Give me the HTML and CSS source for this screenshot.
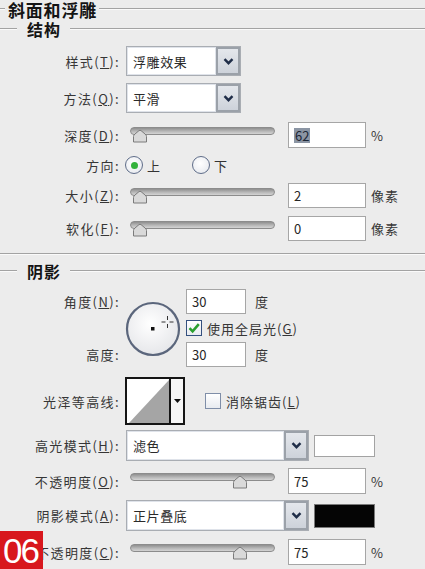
FILE: index.html
```html
<!DOCTYPE html>
<html lang="zh-CN">
<head>
<meta charset="utf-8">
<title>斜面和浮雕</title>
<link rel="stylesheet" href="styles.css">
</head>
<body>
<div class="panel">
  <div class="legend legend-top"><span class="lead"></span><span class="txt">斜面和浮雕</span><span class="line"></span></div>
  <div class="legend legend-sub"><span class="lead"></span><span class="txt">结构</span><span class="line"></span></div>

  <div class="row row-style">
    <span class="lbl">样式(<u>T</u>):</span>
    <div class="select sel-sm"><span class="val">浮雕效果</span><span class="btn"><svg width="11" height="7" viewBox="0 0 11 7"><polyline points="1.5,1.2 5.5,5.2 9.5,1.2" fill="none" stroke="#1f2d48" stroke-width="2.4"/></svg></span></div>
  </div>
  <div class="row row-method">
    <span class="lbl">方法(<u>Q</u>):</span>
    <div class="select sel-sm"><span class="val">平滑</span><span class="btn"><svg width="11" height="7" viewBox="0 0 11 7"><polyline points="1.5,1.2 5.5,5.2 9.5,1.2" fill="none" stroke="#1f2d48" stroke-width="2.4"/></svg></span></div>
  </div>
  <div class="row row-depth">
    <span class="lbl">深度(<u>D</u>):</span>
    <div class="slider"><div class="track"></div><svg class="thumb" style="left:2px" width="16" height="14" viewBox="0 0 16 14"><path d="M1.5 13 L1.5 7.5 Q1.5 6 3 5 L7 1.6 Q8 0.9 9 1.6 L13 5 Q14.5 6 14.5 7.5 L14.5 13 Z" fill="#d9d9d9" stroke="#7b7b7b" stroke-width="1"/></svg></div>
    <span class="num"><span class="sel">62</span></span><span class="unit">%</span>
  </div>
  <div class="row row-dir">
    <span class="lbl lbl-dir">方向:</span>
    <span class="radio on"></span><span class="opt">上</span>
    <span class="radio radio-2"></span><span class="opt">下</span>
  </div>
  <div class="row row-size">
    <span class="lbl">大小(<u>Z</u>):</span>
    <div class="slider"><div class="track"></div><svg class="thumb" style="left:2px" width="16" height="14" viewBox="0 0 16 14"><path d="M1.5 13 L1.5 7.5 Q1.5 6 3 5 L7 1.6 Q8 0.9 9 1.6 L13 5 Q14.5 6 14.5 7.5 L14.5 13 Z" fill="#d9d9d9" stroke="#7b7b7b" stroke-width="1"/></svg></div>
    <span class="num">2</span><span class="unit">像素</span>
  </div>
  <div class="row row-soft">
    <span class="lbl">软化(<u>F</u>):</span>
    <div class="slider"><div class="track"></div><svg class="thumb" style="left:2px" width="16" height="14" viewBox="0 0 16 14"><path d="M1.5 13 L1.5 7.5 Q1.5 6 3 5 L7 1.6 Q8 0.9 9 1.6 L13 5 Q14.5 6 14.5 7.5 L14.5 13 Z" fill="#d9d9d9" stroke="#7b7b7b" stroke-width="1"/></svg></div>
    <span class="num">0</span><span class="unit">像素</span>
  </div>

  <div class="sep"></div>
  <div class="legend legend-shade"><span class="lead"></span><span class="txt">阴影</span><span class="line"></span></div>

  <div class="angle-grid">
    <span class="lbl g-angle">角度(<u>N</u>):</span>
    <svg class="dial" width="56" height="56" viewBox="0 0 56 56">
      <defs><radialGradient id="dg" cx="45%" cy="40%" r="60%"><stop offset="0" stop-color="#ffffff"/><stop offset="1" stop-color="#e6e7ea"/></radialGradient></defs>
      <circle cx="28" cy="28" r="26" fill="url(#dg)" stroke="#5b667c" stroke-width="2.2"/>
      <rect x="26" y="26" width="3.5" height="3.5" fill="#111"/>
      <g stroke="#333" stroke-width="1">
        <line x1="42.5" y1="15" x2="42.5" y2="19"/><line x1="42.5" y1="23" x2="42.5" y2="27"/>
        <line x1="36.5" y1="21" x2="40.5" y2="21"/><line x1="44.5" y1="21" x2="48.5" y2="21"/>
      </g>
    </svg>
    <div class="ctl g-ain"><span class="num num-sm">30</span><span class="unit unit-deg">度</span></div>
    <div class="ctl g-chk"><span class="chk on"><svg width="14" height="14" viewBox="0 0 14 14"><path d="M2.5 7.2 L5.6 10.3 L11.8 3.2" fill="none" stroke="#2a9f2f" stroke-width="2.6"/></svg></span><span class="chk-txt">使用全局光(<u>G</u>)</span></div>
    <span class="lbl g-alt">高度:</span>
    <div class="ctl g-hin"><span class="num num-sm">30</span><span class="unit unit-deg">度</span></div>
  </div>

  <div class="row row-contour">
    <span class="lbl">光泽等高线:</span>
    <svg class="contour" width="60" height="48" viewBox="0 0 60 48">
      <rect x="1" y="1" width="58" height="46" fill="#f6f6f6" stroke="#151515" stroke-width="2"/>
      <rect x="2" y="2" width="42" height="44" fill="#ffffff"/>
      <polygon points="4,46 44,3 44,46" fill="#a5a5a5"/>
      <line x1="45" y1="1" x2="45" y2="47" stroke="#151515" stroke-width="2"/>
      <polygon points="49,22 56,22 52.5,26" fill="#111"/>
    </svg>
    <span class="chk chk-aa"></span><span class="chk-txt">消除锯齿(<u>L</u>)</span>
  </div>

  <div class="row row-hmode">
    <span class="lbl">高光模式(<u>H</u>):</span>
    <div class="select sel-lg"><span class="val">滤色</span><span class="btn"><svg width="11" height="7" viewBox="0 0 11 7"><polyline points="1.5,1.2 5.5,5.2 9.5,1.2" fill="none" stroke="#1f2d48" stroke-width="2.4"/></svg></span></div>
    <span class="swatch sw-white"></span>
  </div>
  <div class="row row-hop">
    <span class="lbl">不透明度(<u>O</u>):</span>
    <div class="slider"><div class="track"></div><svg class="thumb" style="left:102px" width="16" height="14" viewBox="0 0 16 14"><path d="M1.5 13 L1.5 7.5 Q1.5 6 3 5 L7 1.6 Q8 0.9 9 1.6 L13 5 Q14.5 6 14.5 7.5 L14.5 13 Z" fill="#d9d9d9" stroke="#7b7b7b" stroke-width="1"/></svg></div>
    <span class="num">75</span><span class="unit">%</span>
  </div>
  <div class="row row-smode">
    <span class="lbl">阴影模式(<u>A</u>):</span>
    <div class="select sel-lg"><span class="val">正片叠底</span><span class="btn"><svg width="11" height="7" viewBox="0 0 11 7"><polyline points="1.5,1.2 5.5,5.2 9.5,1.2" fill="none" stroke="#1f2d48" stroke-width="2.4"/></svg></span></div>
    <span class="swatch sw-black"></span>
  </div>
  <div class="row row-sop">
    <span class="lbl">不透明度(<u>C</u>):</span>
    <div class="slider"><div class="track"></div><svg class="thumb" style="left:102px" width="16" height="14" viewBox="0 0 16 14"><path d="M1.5 13 L1.5 7.5 Q1.5 6 3 5 L7 1.6 Q8 0.9 9 1.6 L13 5 Q14.5 6 14.5 7.5 L14.5 13 Z" fill="#d9d9d9" stroke="#7b7b7b" stroke-width="1"/></svg></div>
    <span class="num">75</span><span class="unit">%</span>
  </div>

  <div class="badge">06</div>
</div>
</body>
</html>
```

FILE: styles.css
```css
* { box-sizing: border-box; }
html, body { margin: 0; padding: 0; }
body {
  background: #ececec;
  font-family: "Noto Sans CJK SC", "Noto Sans", sans-serif;
  font-size: 13px;
  color: #333;
}
.panel {
  position: relative;
  width: 425px;
  height: 569px;
  overflow: hidden;
}
u { text-decoration: underline; text-underline-offset: 1px; }

/* group legends */
.legend { display: flex; align-items: center; height: 18px; }
.legend .txt {
  font-size: 16px;
  font-weight: 700;
  color: #141414;
  line-height: 18px;
  padding: 0 9px 0 10px;
  letter-spacing: 1px;
}
.legend .lead { width: 17px; }
.legend .line { flex: 1; }
.lead, .line, .sep {
  height: 2px;
  border-top: 1px solid #a3a3a3;
  border-bottom: 1px solid #fafafa;
}
.legend-top .lead { width: 5px; }
.legend-top .txt { padding: 0 2px 0 3px; font-size: 17px; letter-spacing: 0.8px; line-height: 17px; }
.legend-sub { margin-top: 2px; }
.sep { margin-top: 12px; }
.legend-shade { margin-top: 7px; }

/* rows */
.row { display: flex; align-items: center; }
.lbl {
  width: 120px;
  flex: none;
  text-align: right;
  white-space: nowrap;
  letter-spacing: 1.4px;
  color: #363636;
}
.row-style { margin-top: 8px; height: 30px; }
.row-method { margin-top: 7px; height: 30px; }
.row-depth { margin-top: 9px; height: 26px; }
.row-dir { margin-top: 8px; height: 18px; }
.row-size { margin-top: 9px; height: 25px; }
.row-soft { margin-top: 8px; height: 25px; }
.row-contour { margin-top: 10px; height: 48px; }
.row-hmode { margin-top: 5px; height: 31px; }
.row-hop { margin-top: 7px; height: 26px; }
.row-smode { margin-top: 6px; height: 31px; }
.row-sop { margin-top: 8px; height: 26px; }

/* dropdown */
.select {
  display: flex;
  height: 100%;
  margin-left: 6px;
  border: 1px solid #a9adb3;
  background: #fff;
  flex: none;
}
.sel-sm { width: 115px; }
.sel-lg { width: 183px; }
.select .val {
  flex: 1;
  background: #fff;
  border: 1px solid #dfe3ea;
  padding-left: 5px;
  display: flex;
  align-items: center;
  letter-spacing: 0.6px;
  color: #2a2a2a;
}
.select .btn {
  width: 24px;
  flex: none;
  display: flex;
  align-items: center;
  justify-content: center;
  background: linear-gradient(#e4e7ec, #cdd2da);
  border: 2px solid #9ba1a9;
}

/* slider */
.slider {
  position: relative;
  width: 145px;
  height: 16px;
  margin-left: 10px;
  flex: none;
}
.track {
  height: 8px;
  border-radius: 4px;
  border: 1px solid #8c8c8c;
  background: linear-gradient(#8f8f8f, #b8b8b8 55%, #d4d4d4);
}
.thumb { position: absolute; top: 2px; }

/* number inputs */
.num {
  width: 78px;
  height: 100%;
  flex: none;
  margin-left: 13px;
  border: 1px solid #a6a6a6;
  background: #fff;
  padding-left: 5px;
  display: flex;
  align-items: center;
  color: #262626;
}
.num .sel { background: #8b95a4; color: #1d2736; padding: 0 1px; line-height: 15px; }
.unit { margin-left: 5px; color: #363636; letter-spacing: 1px; }

/* radios */
.radio {
  width: 18px;
  height: 18px;
  border-radius: 50%;
  border: 1.5px solid #5f6d89;
  background: radial-gradient(circle at 45% 40%, #ffffff, #e3e6ec);
  margin-left: 5px;
  display: flex;
  align-items: center;
  justify-content: center;
  flex: none;
}
.radio.on::after {
  content: "";
  width: 7px;
  height: 7px;
  border-radius: 50%;
  background: #33b23c;
}
.radio-2 { margin-left: 32px; }
.opt { margin-left: 4px; }

/* angle grid */
.angle-grid {
  display: grid;
  grid-template-columns: 120px 66px 1fr;
  grid-template-rows: 25px 16px 25px;
  row-gap: 6px;
  margin-top: 9px;
  align-items: center;
}
.g-angle { grid-column: 1; grid-row: 1; }
.g-alt { grid-column: 1; grid-row: 3; }
.dial { grid-column: 2; grid-row: 1 / 4; justify-self: center; margin-top: 2px; }
.g-ain { grid-column: 3; grid-row: 1; }
.g-chk { grid-column: 3; grid-row: 2; }
.g-hin { grid-column: 3; grid-row: 3; }
.ctl { display: flex; align-items: center; height: 100%; }
.num-sm { width: 60px; margin-left: 0; }
.unit-deg { margin-left: 9px; }

/* checkboxes */
.chk {
  width: 16px;
  height: 16px;
  flex: none;
  border: 1px solid #34507f;
  background: linear-gradient(#ffffff, #e8ebf0);
  display: flex;
  align-items: center;
  justify-content: center;
}
.chk-txt { margin-left: 5px; letter-spacing: 1px; color: #363636; }
.chk-aa { margin-left: 20px; border-color: #7f8ea8; }
.contour { margin-left: 5px; flex: none; }

/* colour swatches */
.swatch { margin-left: 5px; width: 61px; flex: none; border: 1px solid #a3a3a3; }
.sw-white { height: 22px; background: #fff; }
.sw-black { height: 24px; background: #050505; border-color: #7a7a7a; }

/* corner badge */
.badge {
  position: absolute;
  left: 0;
  top: 531px;
  width: 43px;
  height: 38px;
  background: #d8171d;
  color: #fff;
  font-family: "Liberation Sans", Arial, sans-serif;
  font-size: 35px;
  letter-spacing: -2px;
  display: flex;
  align-items: center;
  justify-content: center;
  line-height: 1;
  padding-right: 2px;
}
```
